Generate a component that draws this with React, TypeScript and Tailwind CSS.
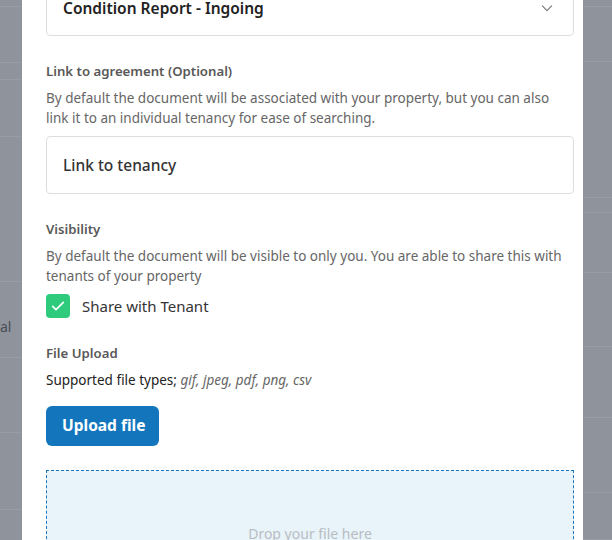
import React from "react";

const leftRows = [7, 56, 17, 57, 145, 76, 75, 77, 40];
const rightRows = [7, 55, 136, 15, 60, 74, 71, 75, 47];

function Overlay({ rows, width, label }: { rows: number[]; width: string; label?: boolean }) {
  return (
    <div className={`${width} shrink-0 h-full bg-[#8f939c] flex flex-col overflow-hidden`}>
      {rows.map((h, i) => (
        <div
          key={i}
          style={{ height: h }}
          className="shrink-0 border-b border-[#989ca5] relative flex items-center"
        >
          {label && i === 5 ? (
            <span className="mt-[14px] text-[14px] leading-none text-[#4a4d55]">al</span>
          ) : null}
        </div>
      ))}
    </div>
  );
}

export default function App() {
  return (
    <div
      className="w-[612px] h-[540px] overflow-hidden flex"
      style={{ fontFamily: '"Noto Sans", "Open Sans", sans-serif' }}
    >
      <Overlay rows={leftRows} width="w-[22px]" label />
      <div className="flex-1 h-full bg-white overflow-hidden">
        <div className="pl-6 pr-[9px] -mt-[22px] flex flex-col">
          <div className="h-[58px] border border-[#dedede] rounded-[4px] flex items-center justify-between pl-4 pr-[19px]">
            <span className="mt-[3px] text-[15.5px] font-semibold text-[#222]">Condition Report - Ingoing</span>
            <svg className="mt-[1px]" width="14" height="14" viewBox="0 0 24 24" fill="none" stroke="#777" strokeWidth="2" strokeLinecap="round" strokeLinejoin="round">
              <path d="M4 8.5l8 8 8-8" />
            </svg>
          </div>

          <div className="mt-[24px] text-[13.2px] font-semibold text-[#585858] leading-[22px]">Link to agreement (Optional)</div>
          <p className="mt-[6px] text-[13.5px] leading-[20px] text-[#666]">
            By default the document will be associated with your property, but you can also link it to an individual tenancy for ease of searching.
          </p>
          <div className="mt-[8px] h-[58px] border border-[#dedede] rounded-[4px] flex items-center pl-4">
            <span className="mt-[1px] text-[15.5px] font-medium text-[#333]">Link to tenancy</span>
          </div>

          <div className="mt-[24px] text-[13.2px] font-semibold text-[#585858] leading-[22px]">Visibility</div>
          <p className="mt-[6px] text-[13.5px] leading-[20px] text-[#666]">
            By default the document will be visible to only you. You are able to share this with tenants of your property
          </p>
          <label className="mt-[8px] flex items-center gap-3">
            <span className="w-6 h-6 rounded-[4px] bg-[#2ecb7c] flex items-center justify-center">
              <svg width="16" height="16" viewBox="0 0 24 24" fill="none" stroke="white" strokeWidth="2.5" strokeLinecap="round" strokeLinejoin="round">
                <path d="M4 12.5l5 5L20 6.5" />
              </svg>
            </span>
            <span className="text-[15px] text-[#333]">Share with Tenant</span>
          </label>

          <div className="mt-[24px] text-[13.2px] font-semibold text-[#585858] leading-[22px]">File Upload</div>
          <p className="mt-[6px] text-[13.5px] leading-[20px] text-[#222]">
            Supported file types; <span className="italic text-[#666]">gif, jpeg, pdf, png, csv</span>
          </p>
          <div className="mt-[16px]">
            <button className="h-10 pl-4 pr-[14px] rounded-[6px] bg-[#1376bd] text-white text-[15.5px] font-bold">Upload file</button>
          </div>
          <div className="mt-[24px] h-[120px] border border-dashed border-[#1a76be] bg-[#e8f3fa] flex items-start justify-center pt-[52px]">
            <span className="text-[14px] text-[#b9bdc1]">Drop your file here</span>
          </div>
        </div>
      </div>
      <Overlay rows={rightRows} width="w-[29px]" />
    </div>
  );
}
